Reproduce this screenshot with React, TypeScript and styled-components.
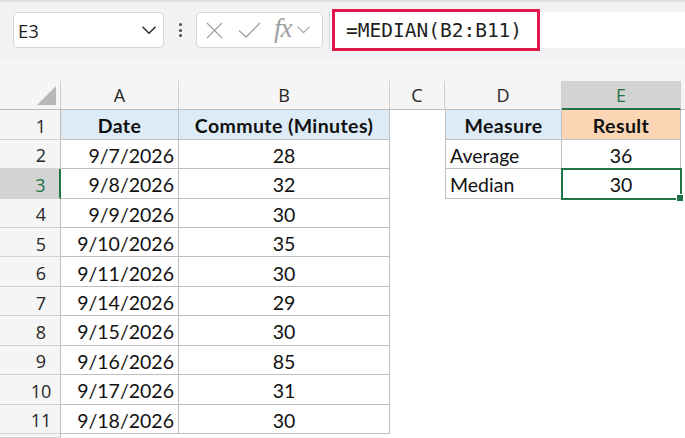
import React from 'react'
import styled, { createGlobalStyle, css } from 'styled-components'

const GlobalStyle = createGlobalStyle`
  html, body {
    margin: 0;
    padding: 0;
    background: #ffffff;
  }
  body {
    font-family: "Open Sans", "Liberation Sans", sans-serif;
  }
`

const GREEN = '#217346'

const Window = styled.div`
  width: 685px;
  height: 438px;
  overflow: hidden;
  display: flex;
  flex-direction: column;
  background: #f5f5f5;
`

const Toolbar = styled.div`
  height: 62px;
  box-sizing: border-box;
  border-top: 2px solid #dedfe1;
  background: #f0f2f4;
  display: flex;
  align-items: center;
  padding: 0 0 2px 13px;
`

const NameBox = styled.div`
  width: 151px;
  height: 36px;
  box-sizing: border-box;
  background: #fff;
  border: 1px solid #d3d5d8;
  border-radius: 5px;
  display: flex;
  align-items: center;
  justify-content: space-between;
  padding: 0 7px 0 4px;
  font-size: 18.5px;
  color: #1f1f1f;
`

const Grip = styled.div`
  width: 32px;
  display: flex;
  flex-direction: column;
  align-items: center;
  gap: 2.5px;
  span {
    width: 3px;
    height: 3px;
    border-radius: 50%;
    background: #4a4a4a;
  }
`

const FxBox = styled.div`
  width: 127px;
  height: 36px;
  box-sizing: border-box;
  background: #fff;
  border: 1px solid #d3d5d8;
  border-radius: 5px;
  display: flex;
  align-items: center;
  padding: 0 4px 0 9px;
  gap: 15px;
  color: #a3a3a3;
`

const FxLabel = styled.span`
  font-family: "Liberation Serif", serif;
  font-style: italic;
  font-size: 27px;
  line-height: 1;
  color: #9e9e9e;
  letter-spacing: -1px;
  margin: -4px -10px 0 -2px;
`

const FormulaBar = styled.div`
  flex: 1;
  height: 36px;
  margin-left: 6px;
  background: #fff;
  border-left: 1px solid #d6d6d6;
  display: flex;
  align-items: center;
`

const Highlight = styled.div`
  height: 42px;
  width: 208px;
  box-sizing: border-box;
  margin-left: 2px;
  border: 3px solid #e0194a;
  display: flex;
  align-items: center;
  padding-left: 11px;
  font-family: "DejaVu Sans Mono", "Liberation Mono", monospace;
  font-size: 19.5px;
  color: #1f1f1f;
  white-space: nowrap;
`

const Spacer = styled.div`
  height: 21px;
  background: #f5f5f5;
`

const Sheet = styled.div`
  flex: 1;
  display: grid;
  grid-template-columns: 61px 118px 211px 55px 117px 119px 1fr;
  grid-template-rows: 29px repeat(11, 29.45px) 1fr;
  background: #fff;
`

const ColHead = styled.div<{ $active?: boolean }>`
  box-sizing: border-box;
  background: #f5f5f5;
  border-right: 1px solid #cfcfcf;
  border-bottom: 1px solid #bdbdbd;
  display: flex;
  align-items: center;
  justify-content: center;
  font-size: 18px;
  color: #262626;
  ${p => p.$active && css`
    background: #d3d3d3;
    color: ${GREEN};
    border-bottom: 2px solid ${GREEN};
  `}
`

const Corner = styled(ColHead)`
  position: relative;
  svg {
    position: absolute;
    right: 4px;
    bottom: 4px;
  }
`

const RowHead = styled.div<{ $active?: boolean }>`
  box-sizing: border-box;
  background: #f5f5f5;
  border-right: 1px solid #bdbdbd;
  border-bottom: 1px solid #d4d4d4;
  display: flex;
  align-items: center;
  justify-content: center;
  padding: 3px 0 0 22px;
  font-size: 18px;
  color: #262626;
  ${p => p.$active && css`
    background: #d3d3d3;
    color: ${GREEN};
    border-right: 2px solid ${GREEN};
  `}
`

const Cell = styled.div<{
  $boxed?: boolean
  $left?: boolean
  $align?: 'left' | 'center' | 'right'
  $fill?: string
  $bold?: boolean
  $selected?: boolean
}>`
  box-sizing: border-box;
  display: flex;
  align-items: center;
  padding: 3px 4px 0;
  font-family: "Lato", "Liberation Sans", sans-serif;
  font-size: 19.5px;
  color: #111;
  white-space: nowrap;
  background: ${p => p.$fill || '#fff'};
  font-weight: ${p => (p.$bold ? 700 : 400)};
  letter-spacing: ${p => (p.$bold ? '0.4px' : '0')};
  justify-content: ${p =>
    p.$align === 'right' ? 'flex-end' : p.$align === 'center' ? 'center' : 'flex-start'};
  ${p => p.$boxed && css`
    border-right: 1px solid #bfbfbf;
    border-bottom: 1px solid #bfbfbf;
  `}
  ${p => p.$left && css`
    border-left: 1px solid #bfbfbf;
  `}
  ${p => p.$selected && css`
    position: relative;
    outline: 2px solid ${GREEN};
    outline-offset: -1px;
    &::after {
      content: '';
      position: absolute;
      right: -4px;
      bottom: -4px;
      width: 6px;
      height: 6px;
      background: ${GREEN};
      border: 1px solid #fff;
    }
  `}
`

const rows = [
  ['9/7/2026', '28'],
  ['9/8/2026', '32'],
  ['9/9/2026', '30'],
  ['9/10/2026', '35'],
  ['9/11/2026', '30'],
  ['9/14/2026', '29'],
  ['9/15/2026', '30'],
  ['9/16/2026', '85'],
  ['9/17/2026', '31'],
  ['9/18/2026', '30'],
]

const summary: Record<number, [string, string]> = {
  2: ['Average', '36'],
  3: ['Median', '30'],
}

function Chevron({ size = 14, color = '#333', width = 1.6 }: { size?: number; color?: string; width?: number }) {
  return (
    <svg width={size} height={size * 0.6} viewBox="0 0 14 8" fill="none">
      <path d="M1 1 L7 7 L13 1" stroke={color} strokeWidth={width} strokeLinecap="round" strokeLinejoin="round" />
    </svg>
  )
}

function FormulaToolbar() {
  return (
    <Toolbar>
      <NameBox>
        <span>E3</span>
        <Chevron />
      </NameBox>
      <Grip>
        <span />
        <span />
        <span />
      </Grip>
      <FxBox>
        <svg width="17" height="17" viewBox="0 0 17 17" fill="none">
          <path d="M1 1 L16 16 M16 1 L1 16" stroke="#a3a3a3" strokeWidth="1.3" />
        </svg>
        <svg width="23" height="16" viewBox="0 0 23 16" fill="none">
          <path d="M1 8.5 L8 15 L22 1" stroke="#a3a3a3" strokeWidth="1.3" />
        </svg>
        <FxLabel>fx</FxLabel>
        <Chevron size={13} color="#a3a3a3" width={1.3} />
      </FxBox>
      <FormulaBar>
        <Highlight>=MEDIAN(B2:B11)</Highlight>
      </FormulaBar>
    </Toolbar>
  )
}

export default function App() {
  return (
    <>
      <GlobalStyle />
      <Window>
        <FormulaToolbar />
        <Spacer />
        <Sheet>
          <Corner>
            <svg width="19" height="19" viewBox="0 0 19 19">
              <path d="M19 0 L19 19 L0 19 Z" fill="#b7b7b7" />
            </svg>
          </Corner>
          <ColHead>A</ColHead>
          <ColHead>B</ColHead>
          <ColHead>C</ColHead>
          <ColHead>D</ColHead>
          <ColHead $active>E</ColHead>
          <ColHead />

          <RowHead>1</RowHead>
          <Cell $boxed $align="center" $fill="#ddebf7" $bold>Date</Cell>
          <Cell $boxed $align="center" $fill="#ddebf7" $bold>Commute (Minutes)</Cell>
          <Cell />
          <Cell $boxed $left $align="center" $fill="#ddebf7" $bold>Measure</Cell>
          <Cell $boxed $align="center" $fill="#fcd5b4" $bold>Result</Cell>
          <Cell />

          {rows.map(([date, mins], i) => {
            const n = i + 2
            const s = summary[n]
            return (
              <React.Fragment key={n}>
                <RowHead $active={n === 3}>{n}</RowHead>
                <Cell $boxed $align="right">{date}</Cell>
                <Cell $boxed $align="center">{mins}</Cell>
                <Cell />
                {s ? (
                  <>
                    <Cell $boxed $left>{s[0]}</Cell>
                    <Cell $boxed $align="center" $selected={n === 3}>{s[1]}</Cell>
                  </>
                ) : (
                  <>
                    <Cell />
                    <Cell />
                  </>
                )}
                <Cell />
              </React.Fragment>
            )
          })}

          <RowHead />
          <Cell />
          <Cell />
        </Sheet>
      </Window>
    </>
  )
}
